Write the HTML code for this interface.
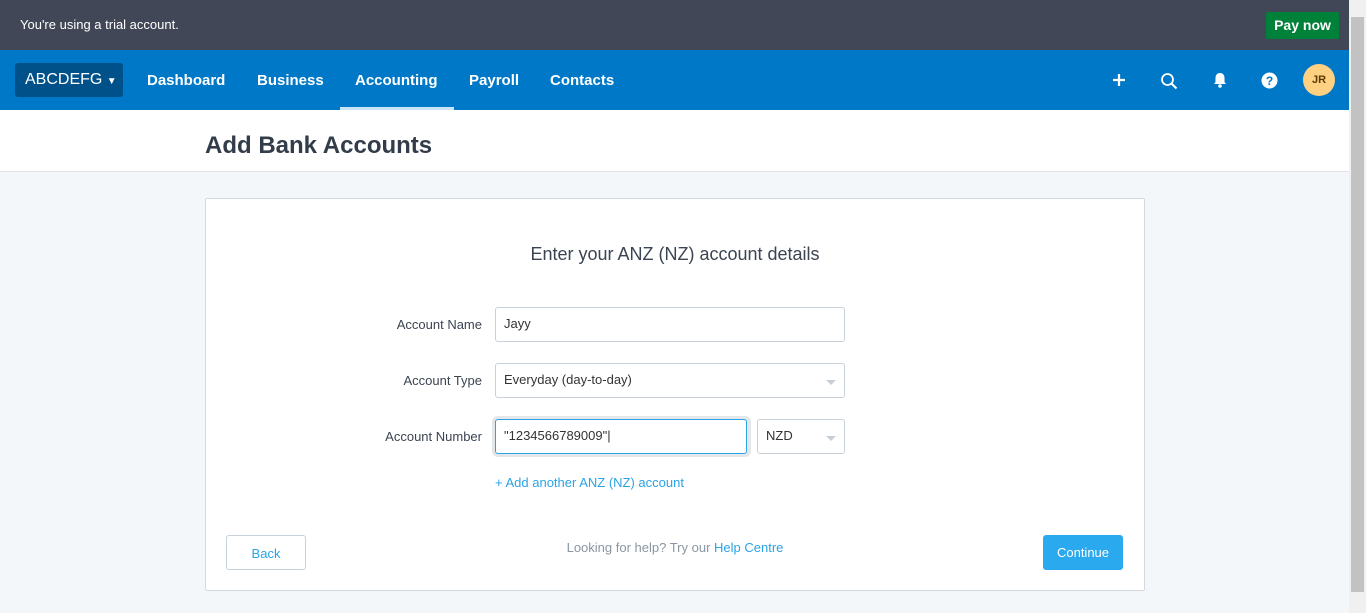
<!DOCTYPE html><html><head><style>
*{box-sizing:border-box;margin:0;padding:0}
body{width:1366px;height:613px;overflow:hidden;font-family:"Liberation Sans",sans-serif;background:#f4f7fa;position:relative}
.top{position:absolute;left:0;top:0;width:1349px;height:50px;background:#414756;color:#fff;font-size:13px}
.top span{position:absolute;left:20px;top:17px}
.pay{position:absolute;left:1266px;top:12px;width:73px;height:27px;background:#008139;border-radius:2px;font-weight:bold;font-size:14px;text-align:center;line-height:27px}
.nav{position:absolute;left:0;top:50px;width:1349px;height:60px;background:#0078c8;color:#fff}
.org{position:absolute;left:15px;top:13px;width:108px;height:34px;background:#00508a;border-radius:3px;font-size:16px;line-height:34px;padding-left:10px}
.nav a{position:absolute;top:22px;font-weight:bold;font-size:15px}
.ul{position:absolute;left:340px;top:57px;width:114px;height:3px;background:#c8e3f5}
.av{position:absolute;left:1303px;top:14px;width:32px;height:32px;border-radius:50%;background:#fdd082;color:#5a3c00;font-size:11px;font-weight:bold;text-align:center;line-height:32px}
.hdr{position:absolute;left:0;top:110px;width:1349px;height:62px;background:#fff;border-bottom:1px solid #dfe3e8}
.hdr h1{position:absolute;left:205px;top:22px;font-size:24px;color:#333d4a}
.card{position:absolute;left:205px;top:198px;width:940px;height:393px;background:#fff;border:1px solid #d3d9df;border-radius:2px}
.t{position:absolute;left:0;width:100%;top:45px;text-align:center;font-size:18px;color:#3b4552}
.lbl{position:absolute;right:662px;font-size:13px;color:#3b4552}
.in{position:absolute;left:289px;height:35px;border:1px solid #c8d1da;border-radius:3px;font-size:13px;color:#333;padding:8px 0 0 8px}
.car{position:absolute;right:8px;top:16px;border:5px solid transparent;border-top:5px solid #c8ced5;border-bottom:0}
.btn{position:absolute;top:336px;width:80px;height:35px;border-radius:3px;font-size:13px;text-align:center;line-height:35px}
.sb{position:absolute;left:1349px;top:0;width:17px;height:613px;background:#f0f0f0}
.sb div{position:absolute;left:2px;top:17px;width:13px;height:575px;background:#c2c2c2}
</style></head><body>
<div class="top"><span>You're using a trial account.</span><div class="pay">Pay now</div></div>
<div class="nav"><div class="org">ABCDEFG <span style="font-size:10px">▼</span></div>
<a style="left:147px">Dashboard</a><a style="left:257px">Business</a><a style="left:355px">Accounting</a><a style="left:469px">Payroll</a><a style="left:550px">Contacts</a>
<div class="ul"></div>
<svg style="position:absolute;left:1111px;top:22px" width="16" height="16"><path d="M8 2v12M2 8h12" stroke="#fff" stroke-width="2.2"/></svg>
<svg style="position:absolute;left:1160px;top:22px" width="18" height="18"><circle cx="7.5" cy="7.5" r="5.5" stroke="#fff" stroke-width="1.8" fill="none"/><path d="M11.5 11.5l5 5" stroke="#fff" stroke-width="2"/></svg>
<svg style="position:absolute;left:1212px;top:21px" width="16" height="18"><path d="M8 2c-3 0-4.5 2.3-4.5 5v4L2 13h12l-1.5-2V7c0-2.7-1.5-5-4.5-5z" fill="#fff"/><circle cx="8" cy="15" r="1.8" fill="#fff"/></svg>
<svg style="position:absolute;left:1261px;top:22px" width="17" height="17"><circle cx="8.5" cy="8.5" r="8" fill="#fff"/><text x="8.5" y="13" font-size="12" font-weight="bold" text-anchor="middle" fill="#0078c8" font-family="Liberation Sans">?</text></svg>
<div class="av">JR</div></div>
<div class="hdr"><h1>Add Bank Accounts</h1></div>
<div class="card">
<div class="t">Enter your ANZ (NZ) account details</div>
<div class="lbl" style="top:118px">Account Name</div>
<div class="in" style="top:108px;width:350px">Jayy</div>
<div class="lbl" style="top:174px">Account Type</div>
<div class="in" style="top:164px;width:350px">Everyday (day-to-day)<div class="car"></div></div>
<div class="lbl" style="top:230px">Account Number</div>
<div style="position:absolute;left:286px;top:217px;width:259px;height:41px;background:#e4e7ea;border-radius:6px"></div>
<div class="in" style="top:220px;width:252px;border-color:#2ba3e6;background:#fff">"1234566789009"|</div>
<div class="in" style="top:220px;left:551px;width:88px">NZD<div class="car"></div></div>
<div style="position:absolute;left:289px;top:276px;font-size:13px;color:#2ba3e6">+ Add another ANZ (NZ) account</div>
<div class="btn" style="left:20px;border:1px solid #c8d1da;color:#2ba3e6;background:#fff">Back</div>
<div style="position:absolute;left:0;width:100%;text-align:center;top:341px;font-size:13px;color:#8a96a3">Looking for help? Try our <span style="color:#2ba3e6">Help Centre</span></div>
<div class="btn" style="left:837px;background:#2ba9ee;color:#fff">Continue</div>
</div>
<div class="sb"><div></div></div>
</body></html>
